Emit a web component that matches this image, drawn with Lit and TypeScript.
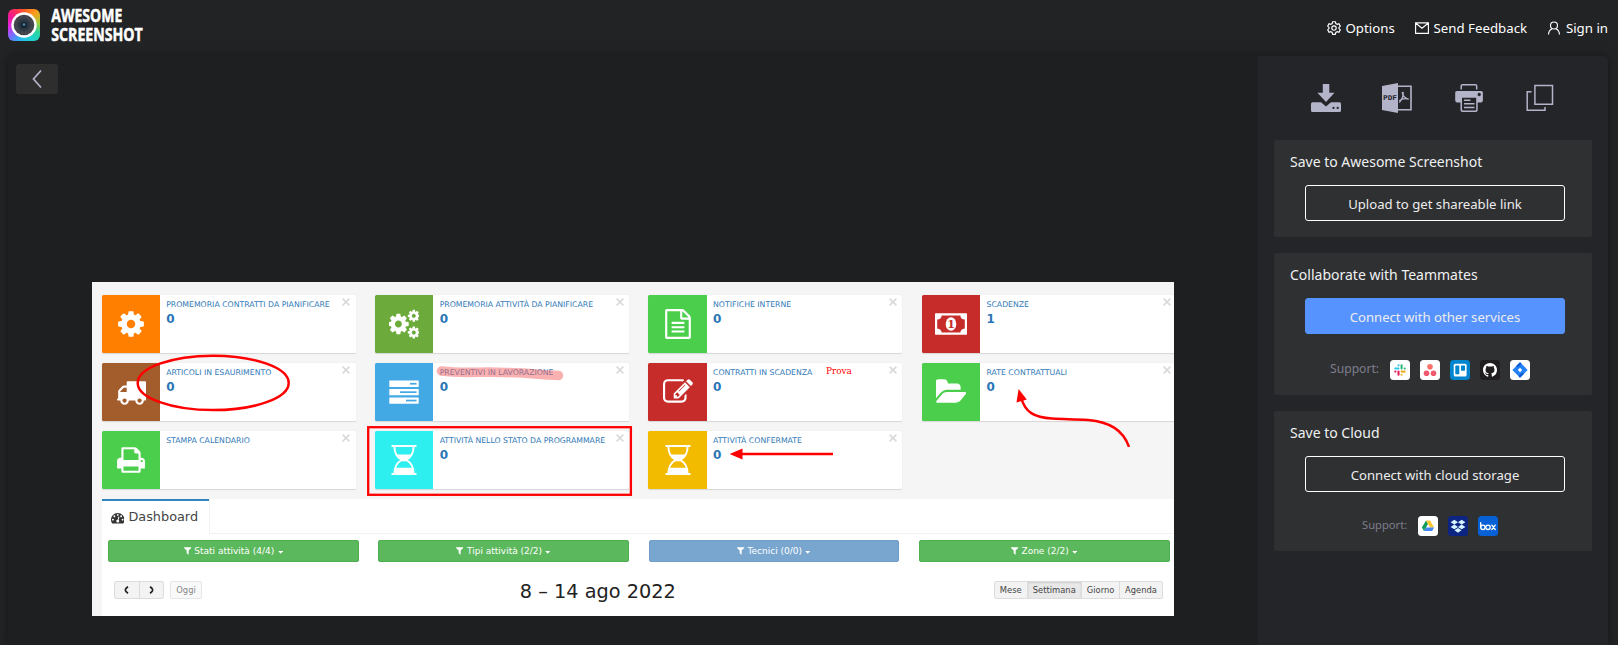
import { LitElement, html, svg, css } from "lit";
import { customElement, property } from "lit/decorators.js";
import { classMap } from "lit/directives/class-map.js";

const PATHS: Record<string, string> = {
  cog: "M1152 896q0-106-75-181t-181-75-181 75-75 181 75 181 181 75 181-75 75-181zm512-109v222q0 12-8 23t-20 13l-185 28q-19 54-39 91 35 50 107 138 10 12 10 25t-9 23q-27 37-99 108t-94 71q-12 0-26-9l-138-108q-44 23-91 38-16 136-29 186-7 28-36 28h-222q-14 0-24.500-8.500t-11.500-21.500l-28-184q-49-16-90-37l-141 107q-10 9-25 9-14 0-25-11-126-114-165-168-7-10-7-23 0-12 8-23 15-21 51-66.500t54-70.500q-27-50-41-99l-183-27q-13-2-21-12.500t-8-23.500v-222q0-12 8-23t19-13l186-28q14-46 39-92-40-57-107-138-10-12-10-24 0-10 9-23 26-36 98.500-107.500t94.500-71.500q13 0 26 10l138 107q44-23 91-38 16-136 29-186 7-28 36-28h222q14 0 24.500 8.500t11.500 21.500l28 184q49 16 90 37l142-107q9-9 24-9 13 0 25 10 129 119 165 170 7 8 7 22 0 12-8 23-15 21-51 66.500t-54 70.500q26 50 41 98l183 28q13 2 21 12.500t8 23.500z",
  truck: "M640 1408q0-52-38-90t-90-38-90 38-38 90 38 90 90 38 90-38 38-90zm-384-512h384v-256h-158q-13 0-22 9l-195 195q-9 9-9 22v30zm1280 512q0-52-38-90t-90-38-90 38-38 90 38 90 90 38 90-38 38-90zm256-1088v1024q0 15-4 26.500t-13.500 18.500-16.500 11.500-23.500 6-22.500 2-25.500 0-22.500-.5q0 106-75 181t-181 75-181-75-75-181h-384q0 106-75 181t-181 75-181-75-75-181h-64q-3 0-22.500.5t-25.500 0-22.500-2-23.500-6-16.500-11.500-13.500-18.500-4-26.500q0-26 19-45t45-19v-320q0-8-.5-35t0-38 2.500-34.500 6.500-37 14-30.500 22.500-30l198-198q19-19 50.500-32t58.500-13h160v-192q0-26 19-45t45-19h1024q26 0 45 19t19 45z",
  print: "M448 1536h896v-256h-896v256zm0-640h896v-384h-160q-40 0-68-28t-28-68v-160h-640v640zm1152 64q0-26-19-45t-45-19-45 19-19 45 19 45 45 19 45-19 19-45zm128 0v416q0 13-9.500 22.500t-22.500 9.500h-224v160q0 40-28 68t-68 28h-960q-40 0-68-28t-28-68v-160h-224q-13 0-22.500-9.500t-9.500-22.500v-416q0-79 56.500-135.500t135.500-56.500h64v-544q0-40 28-68t68-28h672q40 0 88 20t76 48l152 152q28 28 48 76t20 88v256h64q79 0 135.500 56.500t56.500 135.500z",
  file: "M1596 380q28 28 48 76t20 88v1152q0 40-28 68t-68 28h-1344q-40 0-68-28t-28-68v-1600q0-40 28-68t68-28h896q40 0 88 20t76 48zm-444-244v376h376q-10-29-22-41l-313-313q-12-12-41-22zm384 1528v-1024h-416q-40 0-68-28t-28-68v-416h-768v1536h1280zm-1024-864q0-14 9-23t23-9h704q14 0 23 9t9 23v64q0 14-9 23t-23 9h-704q-14 0-23-9t-9-23v-64zm736 224q14 0 23 9t9 23v64q0 14-9 23t-23 9h-704q-14 0-23-9t-9-23v-64q0-14 9-23t23-9h704zm0 256q14 0 23 9t9 23v64q0 14-9 23t-23 9h-704q-14 0-23-9t-9-23v-64q0-14 9-23t23-9h704z",
  folder: "M1815 952q0 31-31 66l-336 396q-43 51-120.500 86.500t-143.500 35.500h-1088q-34 0-60.500-13t-26.500-43q0-31 31-66l336-396q43-51 120.500-86.500t143.500-35.500h1088q34 0 60.500 13t26.500 43zm-343-344v160h-832q-94 0-197 47.500t-164 119.500l-337 396-5 6q0-4-.5-12.500t-.5-12.500v-960q0-92 66-158t158-66h320q92 0 158 66t66 158v32h544q92 0 158 66t66 158z",
  edit: "M888 1184l116-116-152-152-116 116v56h96v96h56zm440-720q-16-16-33 1l-350 350q-17 17-1 33t33-1l350-350q17-17 1-33zm80 594v190q0 119-84.500 203.500t-203.500 84.500h-832q-119 0-203.500-84.500t-84.500-203.500v-832q0-119 84.500-203.500t203.500-84.500h832q63 0 117 25 15 7 18 23 3 17-9 29l-49 49q-14 14-32 8-23-6-45-6h-832q-66 0-113 47t-47 113v832q0 66 47 113t113 47h832q66 0 113-47t47-113v-126q0-13 9-22l64-64q15-15 35-7t20 29zm-96-738l288 288-672 672h-288v-288zm444 132l-92 92-288-288 92-92q28-28 68-28t68 28l152 152q28 28 28 68t-28 68z",
  filter: "M1595 295q17 41-14 70l-493 493v742q0 42-39 59-13 5-25 5-27 0-45-19l-256-256q-19-19-19-45v-486l-493-493q-31-29-14-70 17-39 59-39h1280q42 0 59 39z",
  gauge: "M384 1152q0-53-37.500-90.500t-90.500-37.500-90.500 37.500-37.500 90.500 37.500 90.500 90.500 37.500 90.500-37.500 37.500-90.500zm192-448q0-53-37.500-90.500t-90.500-37.500-90.500 37.500-37.500 90.500 37.500 90.500 90.500 37.500 90.500-37.500 37.500-90.500zm428 481l101-382q6-26-7.500-48.500t-38.500-29.500-48 6.500-30 39.500l-101 382q-60 5-107 43.500t-63 98.500q-20 77 20 146t117 89 146-20 89-117q16-60-6-117t-72-91zm660-33q0-53-37.500-90.500t-90.500-37.500-90.500 37.500-37.500 90.500 37.500 90.500 90.500 37.500 90.500-37.500 37.500-90.500zm-640-640q0-53-37.500-90.500t-90.500-37.500-90.500 37.500-37.500 90.500 37.500 90.500 90.500 37.500 90.500-37.500 37.500-90.500zm448 192q0-53-37.500-90.500t-90.500-37.500-90.500 37.500-37.500 90.500 37.500 90.500 90.500 37.500 90.500-37.500 37.500-90.500zm320 448q0 261-141 483-19 29-54 29h-1402q-35 0-54-29-141-221-141-483 0-182 71-348t191-286 286-191 348-71 348 71 286 191 191 286 71 348z",
};

const glyph = (name: string, cls: string) =>
  html`<svg class=${cls} viewBox="0 0 1792 1792"><path fill="currentColor" d=${PATHS[name]} /></svg>`;

const tileIcon = (name: string) => {
  if (name === "cogs")
    return html`<svg class="ti" viewBox="0 0 30 30" fill="currentColor">
      <g transform="translate(-2.6 3) scale(.0134)"><path d=${PATHS.cog} /></g>
      <g transform="translate(17.8 -.2) scale(.0078)"><path d=${PATHS.cog} /></g>
      <g transform="translate(17.8 16.500) scale(.0078)"><path d=${PATHS.cog} /></g>
    </svg>`;
  if (name === "tasks")
    return html`<svg class="ti" viewBox="0 0 30 30">
      ${[3.600, 12.000, 20.400].map((y, i) => svg`
        <rect x="0.300" y=${y} width="29.400" height="6.300" rx=".6" fill="currentColor"/>
        <rect x=${[21, 11, 17][i]} y=${y + 2.300} width=${[6.500, 16.500, 10.500][i]} height="1.700" class="cut"/>`)}
    </svg>`;
  if (name === "hourglass")
    return html`<svg class="ti" viewBox="0 0 30 30">
      <path fill="currentColor" d="M2.500 0h25v1.900h-25zM2.500 28.100h25V30h-25z"/>
      <path fill="none" stroke="currentColor" stroke-width="1.900" d="M5.400 1.500C5.400 8.500 8.400 12.600 12.600 15 8.400 17.400 5.400 21.500 5.400 28.500M24.600 1.500C24.600 8.500 21.600 12.600 17.400 15 21.600 17.400 24.600 21.500 24.600 28.500"/>
      <path fill="currentColor" d="M6.700 9.600H23.300Q21 13.400 17.200 15 16.600 16 15 16T12.800 15Q9 13.400 6.700 9.600zM6 22.700H24L24.800 28.500H5.200z"/>
      <path fill="currentColor" d="M12.200 14.500h5.600v1.800h-5.600z"/>
    </svg>`;
  if (name === "money")
    return html`<svg class="ti wide" viewBox="0 0 32 30">
      <path fill="currentColor" fill-rule="evenodd" d="M.8 4.300H31.200Q32 4.300 32 5.100V24.900Q32 25.700 31.200 25.700H.8Q0 25.700 0 24.900V5.100Q0 4.300.8 4.300zM6.600 6.400Q6.400 10.200 2.200 10.600V19.400Q6.400 19.800 6.600 23.600H25.400Q25.600 19.800 29.800 19.400V10.600Q25.600 10.200 25.400 6.400z"/>
      <ellipse cx="16" cy="15" rx="5.300" ry="6.800" fill="currentColor"/>
      <text x="16" y="19" text-anchor="middle" class="one">1</text>
    </svg>`;
  return glyph(name, "ti");
};

interface Tile { icon: string; color: string; title: string; value: string; }

const TILES: Tile[] = [
  { icon: "cog", color: "orange", title: "PROMEMORIA CONTRATTI DA PIANIFICARE", value: "0" },
  { icon: "cogs", color: "olive", title: "PROMEMORIA ATTIVITÀ DA PIANIFICARE", value: "0" },
  { icon: "file", color: "green", title: "NOTIFICHE INTERNE", value: "0" },
  { icon: "money", color: "red", title: "SCADENZE", value: "1" },
  { icon: "truck", color: "brown", title: "ARTICOLI IN ESAURIMENTO", value: "0" },
  { icon: "tasks", color: "blue", title: "PREVENTIVI IN LAVORAZIONE", value: "0" },
  { icon: "edit", color: "red", title: "CONTRATTI IN SCADENZA", value: "0" },
  { icon: "folder", color: "green", title: "RATE CONTRATTUALI", value: "0" },
  { icon: "print", color: "green", title: "STAMPA CALENDARIO", value: "" },
  { icon: "hourglass", color: "cyan", title: "ATTIVITÀ NELLO STATO DA PROGRAMMARE", value: "0" },
  { icon: "hourglass", color: "amber", title: "ATTIVITÀ CONFERMATE", value: "0" },
];

@customElement("dashboard-shot")
class DashboardShot extends LitElement {
  static styles = css`
    :host { display: block; position: relative; box-sizing: border-box; width: 1082px; height: 334px; overflow: hidden;
      background: #f5f5f5; font-family: "DejaVu Sans", sans-serif; color: #333; padding: 13px 0 0 9.600px; }
    .tiles { display: grid; grid-template-columns: repeat(4, 254px); grid-auto-rows: 58.200px; gap: 9.800px 19.450px; }
    .tile { display: flex; background: #fff; border-radius: 1.500px; box-shadow: 0 .7px 1px rgba(0,0,0,.13); }
    .pic { width: 58.300px; flex: none; display: flex; align-items: center; justify-content: center; color: #fff; border-radius: 1.500px 0 0 1.500px; }
    .ti { width: 30px; height: 30px; display: block; }
    .wide { width: 32px; }
    .orange { background: #ff8000; } .olive { background: #6cab3b; } .green { background: #4bce4b; }
    .red { background: #c62d2a; } .brown { background: #a35c2c; } .blue { background: #43a9e5; }
    .cyan { background: #2eefef; } .amber { background: #f2bb00; }
    .cut { fill: #43a9e5; }
    .one { font: bold 11px "DejaVu Serif", serif; fill: #c62d2a; }
    .txt { flex: 1; padding: 4.600px 0 0 6.300px; color: #337ab7; }
    .ttl { font-size: 7.750px; line-height: 10px; white-space: nowrap; }
    .val { font-size: 12px; line-height: 14px; font-weight: bold; margin-top: 2.200px; color: #2b76b6; }
    .x { width: 8px; height: 8px; margin: 3.300px 5.200px 0 0; flex: none; }
    .panel { background: #fff; margin-top: 9.800px; height: 117px; }
    .tabs { display: flex; height: 35px; box-sizing: border-box; }
    .rest { flex: 1; border-bottom: 1px solid #f2f2f2; border-left: 1px solid #f2f2f2; }
    .tab { width: 107px; box-sizing: border-box; border-top: 2px solid #2f86be; padding: 0 0 1px 9.300px; display: flex; align-items: center; gap: 4px; font-size: 12.850px; color: #444; }
    .gauge { width: 13.500px; height: 13.500px; color: #333; margin-top: 1px; }
    .filters { display: grid; grid-template-columns: repeat(4, 250.700px); gap: 19.600px; padding: 6px 0 0 6.400px; }
    .filter { height: 22.300px; box-sizing: border-box; border-radius: 2px; background: #5cb85c; border: 1px solid #4fae4f; color: #fff; font-size: 9px;
      display: flex; align-items: center; justify-content: center; gap: 2.300px; padding-right: 1px; }
    .off { background: #79a6cf; border-color: #719fca; }
    .fi { width: 9.300px; height: 9.300px; }
    .caret { width: 5.400px; height: 3px; margin: 2px 0 0 1px; }
    .bar { display: flex; justify-content: space-between; align-items: flex-start; padding: 18.700px 11.200px 0 12.400px; }
    .grp { display: flex; }
    .left { gap: 6.300px; }
    .btns { display: flex; height: 18px; box-sizing: border-box; border: 1px solid #dcdcdc; border-radius: 2px; background: #f3f3f3; overflow: hidden; }
    .b { box-sizing: border-box; display: flex; align-items: center; justify-content: center; font-size: 8.370px; color: #444; border-left: 1px solid #dcdcdc; }
    .b:first-child { border-left: 0; }
    .w24 { width: 24px; } .w30 { width: 29.500px; color: #888; }
    .w32 { width: 32px; } .w54 { width: 54px; } .w38 { width: 38.500px; } .w43 { width: 42.500px; }
    .on { background: #e8e8e8; box-shadow: inset 0 1px 2px rgba(0,0,0,.12); }
    .faint { border-color: #e6e6e6; background: #f9f9f9; }
    .date { font-size: 19.300px; line-height: 22px; margin-top: .5px; color: #222; white-space: nowrap; }
    .ar { width: 5px; height: 8px; }
    .marks { position: absolute; left: 0; top: 0; width: 1082px; height: 334px; }
    .prova { font: 8.900px "DejaVu Serif", serif; fill: #f00; }
  `;
  private btn(label: string, w: string, on = false) {
    return html`<div class=${classMap({ b: true, [w]: true, on })}>${label}</div>`;
  }
  render() {
    return html`
      <div class="tiles">
        ${TILES.map((t) => html`<div class="tile">
          <div class="pic ${t.color}">${tileIcon(t.icon)}</div>
          <div class="txt"><div class="ttl">${t.title}</div><div class="val">${t.value}</div></div>
          <svg class="x" viewBox="0 0 8 8"><path d="M.6.6 7.400 7.400M7.400.6.6 7.400" stroke="#d8d8d8" stroke-width="1.500"/></svg>
        </div>`)}
      </div>
      <div class="panel">
        <div class="tabs"><div class="tab">${glyph("gauge", "gauge")}<span>Dashboard</span></div><div class="rest"></div></div>
        <div class="filters">
          ${["Stati attività (4/4)", "Tipi attività (2/2)", "Tecnici (0/0)", "Zone (2/2)"].map((f, i) => html`
            <div class=${classMap({ filter: true, off: i === 2 })}>${glyph("filter", "fi")}<span>${f}</span>
              <svg class="caret" viewBox="0 0 5 3"><path d="M0 0h5L2.500 2.800z" fill="#fff"/></svg></div>`)}
        </div>
        <div class="bar">
          <div class="grp left">
            <div class="btns">
              <div class="b w24"><svg class="ar" viewBox="0 0 5 8"><path d="M4 .8Q.8 3 1.500 4 .8 5 4 7.200" fill="none" stroke="#222" stroke-width="1.700"/></svg></div>
              <div class="b w24"><svg class="ar" viewBox="0 0 5 8"><path d="M1 .8Q4.200 3 3.500 4 4.200 5 1 7.200" fill="none" stroke="#222" stroke-width="1.700"/></svg></div>
            </div>
            <div class="btns faint">${this.btn("Oggi", "w30")}</div>
          </div>
          <div class="date">8 – 14 ago 2022</div>
          <div class="btns">${this.btn("Mese", "w32")}${this.btn("Settimana", "w54", true)}${this.btn("Giorno", "w38")}${this.btn("Agenda", "w43")}</div>
        </div>
      </div>
      <svg class="marks" viewBox="92 282 1082 334" fill="none" stroke="#fe0000" stroke-width="2.500">
        <ellipse cx="213.200" cy="382.900" rx="75.500" ry="27.200"/>
        <rect x="368.200" y="427.200" width="262.700" height="67.600" stroke-width="2.300"/>
        <path d="M441.500 371C465 374 482 371 505 372.500 530 373 538 374.500 558.500 375.500" stroke="#f46464" stroke-opacity=".5" stroke-width="9.600" stroke-linecap="round" stroke-linejoin="round"/>
        <path d="M742 454.100H833"/>
        <path d="M729.600 454.100 742.500 448.600V459.600z" fill="#fe0000" stroke="none"/>
        <path d="M1021.300 398C1025 412 1034 417.500 1052 418.500 1064 419.300 1074 419 1088 420 1110 422 1123 430 1129 446.800"/>
        <path d="M1018.600 389 1016.500 402.500 1026.800 399.500z" fill="#fe0000" stroke="none"/>
        <text class="prova" x="826" y="373.800" stroke="none">Prova</text>
      </svg>`;
  }
}

const SERVICES: Record<string, unknown> = {
  slack: html`<svg class="app" viewBox="0 0 20 20"><rect width="20" height="20" rx="3.500" fill="#fff"/>
    <g fill="none" stroke-width="2.100" stroke-linecap="round">
      <path d="M8.500 5.300V5.400M5.300 8.500H8.500" stroke="#36c5f0"/><path d="M11.600 5.300V8.500M14.700 8.500H14.800" stroke="#2eb67d"/>
      <path d="M11.600 11.600H14.700M11.600 14.700V14.800" stroke="#ecb22e"/><path d="M8.500 11.600V14.700M5.300 11.600H5.400" stroke="#e01e5a"/></g></svg>`,
  asana: html`<svg class="app" viewBox="0 0 20 20"><rect width="20" height="20" rx="3.500" fill="#fff"/>
    <circle cx="10" cy="6.700" r="2.800" fill="#f9716a"/><circle cx="6.500" cy="13.200" r="2.800" fill="#f2586f"/><circle cx="13.500" cy="13.200" r="2.800" fill="#f2586f"/></svg>`,
  trello: html`<svg class="app" viewBox="0 0 20 20"><rect width="20" height="20" rx="3.500" fill="#0085cf"/>
    <rect x="3.700" y="3.700" width="12.900" height="12.900" rx="1.600" fill="#fff"/><rect x="5.300" y="5.400" width="4" height="8.800" rx=".7" fill="#0085cf"/><rect x="11" y="5.400" width="4" height="5.300" rx=".7" fill="#0085cf"/></svg>`,
  github: html`<svg class="app" viewBox="0 0 20 20"><rect width="20" height="20" rx="3.500" fill="#211d1f"/>
    <g transform="translate(3 3) scale(.875)"><path fill="#fff" d="M8 0C3.580 0 0 3.580 0 8c0 3.540 2.290 6.530 5.470 7.590.4.070.55-.17.55-.38 0-.19-.01-.82-.01-1.490-2.010.37-2.530-.49-2.690-.94-.09-.23-.48-.94-.82-1.130-.28-.15-.68-.52-.01-.53.63-.01 1.080.58 1.230.82.72 1.210 1.870.87 2.330.66.07-.52.28-.87.51-1.070-1.780-.2-3.640-.89-3.640-3.950 0-.87.31-1.590.82-2.150-.08-.2-.36-1.020.08-2.120 0 0 .67-.21 2.200.82.64-.18 1.320-.27 2-.27s1.360.09 2 .27c1.530-1.040 2.200-.82 2.200-.82.44 1.100.16 1.920.08 2.120.51.56.82 1.270.82 2.150 0 3.070-1.870 3.750-3.650 3.950.29.25.54.73.54 1.480 0 1.070-.01 1.930-.01 2.200 0 .21.15.46.55.38A8.010 8.010 0 0 0 16 8c0-4.420-3.580-8-8-8z"/></g></svg>`,
  jira: html`<svg class="app" viewBox="0 0 20 20"><rect width="20" height="20" rx="3.500" fill="#fff"/>
    <path d="M10 2.200 17.600 10 10 17.800 2.400 10z" fill="#2480f5"/><path d="M10 2.200 11.500 3.700Q10 6 7.300 7.300L6.300 6zM10 17.800 8.600 16.300Q10 14 12.800 12.700L13.800 14z" fill="#0a58d0"/><path d="M10 7.800 12.200 10 10 12.200 7.800 10z" fill="#fff"/></svg>`,
  drive: html`<svg class="app" viewBox="0 0 20 20"><rect width="20" height="20" rx="3.500" fill="#fff"/>
    <path d="M8 4.400 10 7.900 6 15 3.900 11.500z" fill="#0f9d58"/><path d="M8 4.400H12.100L16.100 11.500H12.100z" fill="#fdc52f"/><path d="M8 11.500H16.100L14.100 15H6z" fill="#4285f4"/></svg>`,
  dropbox: html`<svg class="app" viewBox="0 0 20 20"><rect width="20" height="20" rx="3.500" fill="#0c2482"/>
    <path fill="#d6f4ff" d="M6.300 3.800 10 6.200 6.300 8.500 2.600 6.200zM13.700 3.800 17.400 6.200 13.700 8.500 10 6.200zM6.300 8.600 10 11 6.300 13.300 2.600 11zM13.700 8.600 17.400 11 13.700 13.300 10 11zM10 12.100 13.500 14.300 10 16.700 6.500 14.300z"/></svg>`,
  box: html`<svg class="app" viewBox="0 0 20 20"><rect width="20" height="20" rx="3.500" fill="#0561d5"/>
    <g fill="none" stroke="#fff" stroke-width="1.350" stroke-linecap="round"><path d="M2.700 6.700V11.300"/><circle cx="4.900" cy="11.300" r="2.200"/><circle cx="10" cy="11.300" r="2.200"/><path d="M13.800 9.100 17.200 13.500M17.200 9.100 13.800 13.500"/></g></svg>`,
};

@customElement("save-card")
class SaveCard extends LitElement {
  @property() heading = "";
  @property() action = "";
  @property({ type: Boolean }) primary = false;
  @property({ type: Boolean }) compact = false;
  @property({ attribute: false }) services: string[] = [];
  static styles = css`
    :host { display: block; background: #2f3032; padding: 12px 27px 0 16px; border-radius: 2px; box-sizing: border-box; }
    .h { font-size: 14px; line-height: 20px; color: #f0f0f1; height: 20px; white-space: nowrap; }
    .go { height: 36px; box-sizing: border-box; width: 260px; margin: 13px 0 0 15px; border: 1px solid #fff; border-radius: 3px; color: #ececed;
      font-size: 13.150px; display: flex; align-items: center; justify-content: center; padding-top: 2px; }
    .primary { background: #5793ff; border-color: #5793ff; }
    .sup { display: flex; align-items: center; gap: 10px; margin: 26px 0 0 40px; height: 20px; color: #7d7d8c; font-size: 12.150px; }
    .compact { margin: 24px 0 0 72px; font-size: 11.200px; }
    .lbl { margin-top: -4px; width: 50px; }
    .compact .lbl { width: 46px; }
    .app { width: 20px; height: 20px; display: block; }
  `;
  render() {
    return html`<div class="h">${this.heading}</div>
      <div class=${classMap({ go: true, primary: this.primary })}>${this.action}</div>
      ${this.services.length
        ? html`<div class=${classMap({ sup: true, compact: this.compact })}><span class="lbl">Support:</span>${this.services.map((s) => SERVICES[s])}</div>`
        : null}`;
  }
}

@customElement("app-root")
class AppRoot extends LitElement {
  static styles = css`
    :host { display: flex; flex-direction: column; width: 100%; height: 645px; overflow: hidden; background: #222325; font-family: "Noto Sans", sans-serif; color: #fff; }
    .top { height: 56px; flex: none; display: flex; justify-content: space-between; padding: 0 10px 0 8px; }
    .brand { display: flex; padding-top: 9px; gap: 11px; }
    .logo { width: 32px; height: 32px; border-radius: 6px; background: conic-gradient(#ff5a28, #ff9a1c 40deg, #a6cc35 80deg, #27d3a4 120deg, #20d2cf 150deg, #25b8ee 195deg, #7a6cff 230deg, #e127e3 265deg, #f0189a 300deg, #ff3550 335deg, #ff5a28);
      display: flex; align-items: center; justify-content: center; }
    .lens { width: 26px; height: 26px; }
    .name { width: 140px; height: 54px; margin-top: -9px; }
    .word { font: bold 17.800px "Open Sans", sans-serif; fill: #fff; stroke: #fff; stroke-width: .5; }
    .nav { display: flex; gap: 20px; align-items: center; font-size: 13.250px; padding-top: 1px; height: 54px; }
    .nav div { display: flex; align-items: center; gap: 4.800px; white-space: nowrap; }
    .nav svg { width: 14px; height: 14px; fill: none; stroke: #fff; stroke-width: 1.150; margin-top: -1px; }
    .main { flex: 1; margin: 0 10px 0 8px; display: flex; min-height: 0; border-radius: 6px 6px 0 0; box-shadow: 0 0 10px rgba(0,0,0,.35); }
    .canvas { width: 1250px; flex: none; box-sizing: border-box; padding: 8px; border-radius: 6px 0 0 0; background: radial-gradient(circle at 8px 8px, #131415 .8px, transparent 1.400px) 0 0 / 16px 16px, #1e1f21; }
    .back { width: 42px; height: 30px; border-radius: 3px; background: #2e2e2f; display: flex; align-items: center; justify-content: center; }
    .back svg { width: 10px; height: 20px; }
    .shot { margin: 188px 0 0 76px; }
    .side { flex: 1; background: #242528; border-radius: 0 6px 0 0; padding: 26px 16px 0; display: flex; flex-direction: column; }
    .tools { display: flex; justify-content: space-between; padding: 0 36.500px 0 36px; height: 32px; margin-bottom: 26px; }
    .tools svg { width: 32px; height: 32px; fill: #b3b3c9; }
    .pdf { font: bold 6.500px "DejaVu Sans Mono", monospace; fill: #242528; }
    .c1 { height: 97px; margin-bottom: 16px; } .c2 { height: 142px; margin-bottom: 16px; } .c3 { height: 140px; }
  `;
  render() {
    return html`
      <div class="top">
        <div class="brand">
          <div class="logo"><svg class="lens" viewBox="0 0 26 26"><circle cx="13" cy="13" r="12.700" fill="#fff"/><circle cx="13" cy="13" r="10.300" fill="#42464c"/><circle cx="13" cy="13" r="6.500" fill="#2d3a45"/><circle cx="13" cy="13" r="3.300" fill="#18242e"/><circle cx="13" cy="12.600" r="1.400" fill="#3f83a5"/></svg></div>
          <svg class="name" viewBox="0 0 140 54">
            <text class="word" x="0.300" y="22" textLength="71" lengthAdjust="spacingAndGlyphs">AWESOME</text>
            <text class="word" x="0.300" y="41" textLength="91.500" lengthAdjust="spacingAndGlyphs">SCREENSHOT</text>
          </svg>
        </div>
        <div class="nav">
          <div><svg viewBox="0 0 14 14"><circle cx="7" cy="7" r="2.200"/><path d="M5.700.7H8.300L8.800 2.500 10.300 3.300 12 2.800 13.300 5.100 12 6.400V7.600L13.300 8.900 12 11.200 10.300 10.700 8.800 11.500 8.300 13.300H5.700L5.200 11.500 3.700 10.700 2 11.200.7 8.900 2 7.600V6.400L.7 5.100 2 2.800 3.700 3.300 5.200 2.500z"/></svg>Options</div>
          <div><svg viewBox="0 0 14 14"><path d="M.6 1.800H13.400V12.300H.6zM.9 2.200 7 7.200 13.100 2.200"/></svg>Send Feedback</div>
          <div><svg viewBox="0 0 14 14"><circle cx="7" cy="4.500" r="3.500"/><path d="M1.500 13.500Q1.700 9.500 5 7.800M12.500 13.500Q12.300 9.500 9 7.800"/></svg>Sign in</div>
        </div>
      </div>
      <div class="main">
        <div class="canvas">
          <div class="back"><svg viewBox="0 0 10 20"><path d="M9 1.500 1.500 10 9 18.500" fill="none" stroke="#b3b3c9" stroke-width="1.700"/></svg></div>
          <dashboard-shot class="shot"></dashboard-shot>
        </div>
        <div class="side">
          <div class="tools">
            <svg viewBox="0 0 32 32"><path d="M12.800 2h6.500v8.700h5.200L16 20 7.400 10.700h5.400z"/><path fill-rule="evenodd" d="M2.500 20.300H11L16 24.500 21 20.300H29.500Q31 20.300 31 21.800V28.500Q31 30 29.500 30H2.500Q1 30 1 28.500V21.800Q1 20.300 2.500 20.300zM23.500 24.800a1.100 1.100 0 1 0 .01 0M27.700 24.800a1.100 1.100 0 1 0 .01 0"/></svg>
            <svg viewBox="0 0 32 32"><path d="M1 4 17 1V31L1 28z"/><path d="M17 4.300H30V27.700H17" fill="none" stroke="#b3b3c9" stroke-width="1.600"/><path d="M21.300 10Q21.500 15.500 27.500 17.300M22 10Q23 15 18.300 20.500M18.300 18.800Q22.500 15.500 27.800 17.200" fill="none" stroke="#b3b3c9" stroke-width="1.400"/><text class="pdf" x="2" y="18" textLength="14" lengthAdjust="spacingAndGlyphs">PDF</text></svg>
            <svg viewBox="-1.200 0 32 32"><path d="M8 7.500V4Q8 2.700 9.300 2.700H22.200Q23.500 2.700 23.500 4V7.500" fill="none" stroke="#b3b3c9" stroke-width="1.500"/><path fill-rule="evenodd" d="M3.700 8.900H28Q29.700 8.900 29.700 10.600V18.600Q29.700 20.400 28 20.400H24.500V28Q24.500 30 22.500 30H9.300Q7.300 30 7.300 28V20.400H3.700Q2 20.400 2 18.600V10.600Q2 8.900 3.700 8.900zM26 10.800a1.700 1.700 0 1 0 .01 0M8.800 15.800V27.500Q8.800 28.500 9.800 28.500H22Q23 28.500 23 27.500V15.800z"/><path d="M10.800 17.400h6.500v1.500h-6.500zM10.800 21h10.500v1.500H10.800zM10.800 24.800h10.500v1.500H10.800z"/></svg>
            <svg viewBox="-.5 0 32 32"><path d="M11.400 3.500H29V22.200H11.400zM8 9.700H3.700V28.300H21.500V25" fill="none" stroke="#b3b3c9" stroke-width="1.500"/></svg>
          </div>
          <save-card class="c1" heading="Save to Awesome Screenshot" action="Upload to get shareable link"></save-card>
          <save-card class="c2" heading="Collaborate with Teammates" action="Connect with other services" primary .services=${["slack", "asana", "trello", "github", "jira"]}></save-card>
          <save-card class="c3" heading="Save to Cloud" action="Connect with cloud storage" compact .services=${["drive", "dropbox", "box"]}></save-card>
        </div>
      </div>`;
  }
}
